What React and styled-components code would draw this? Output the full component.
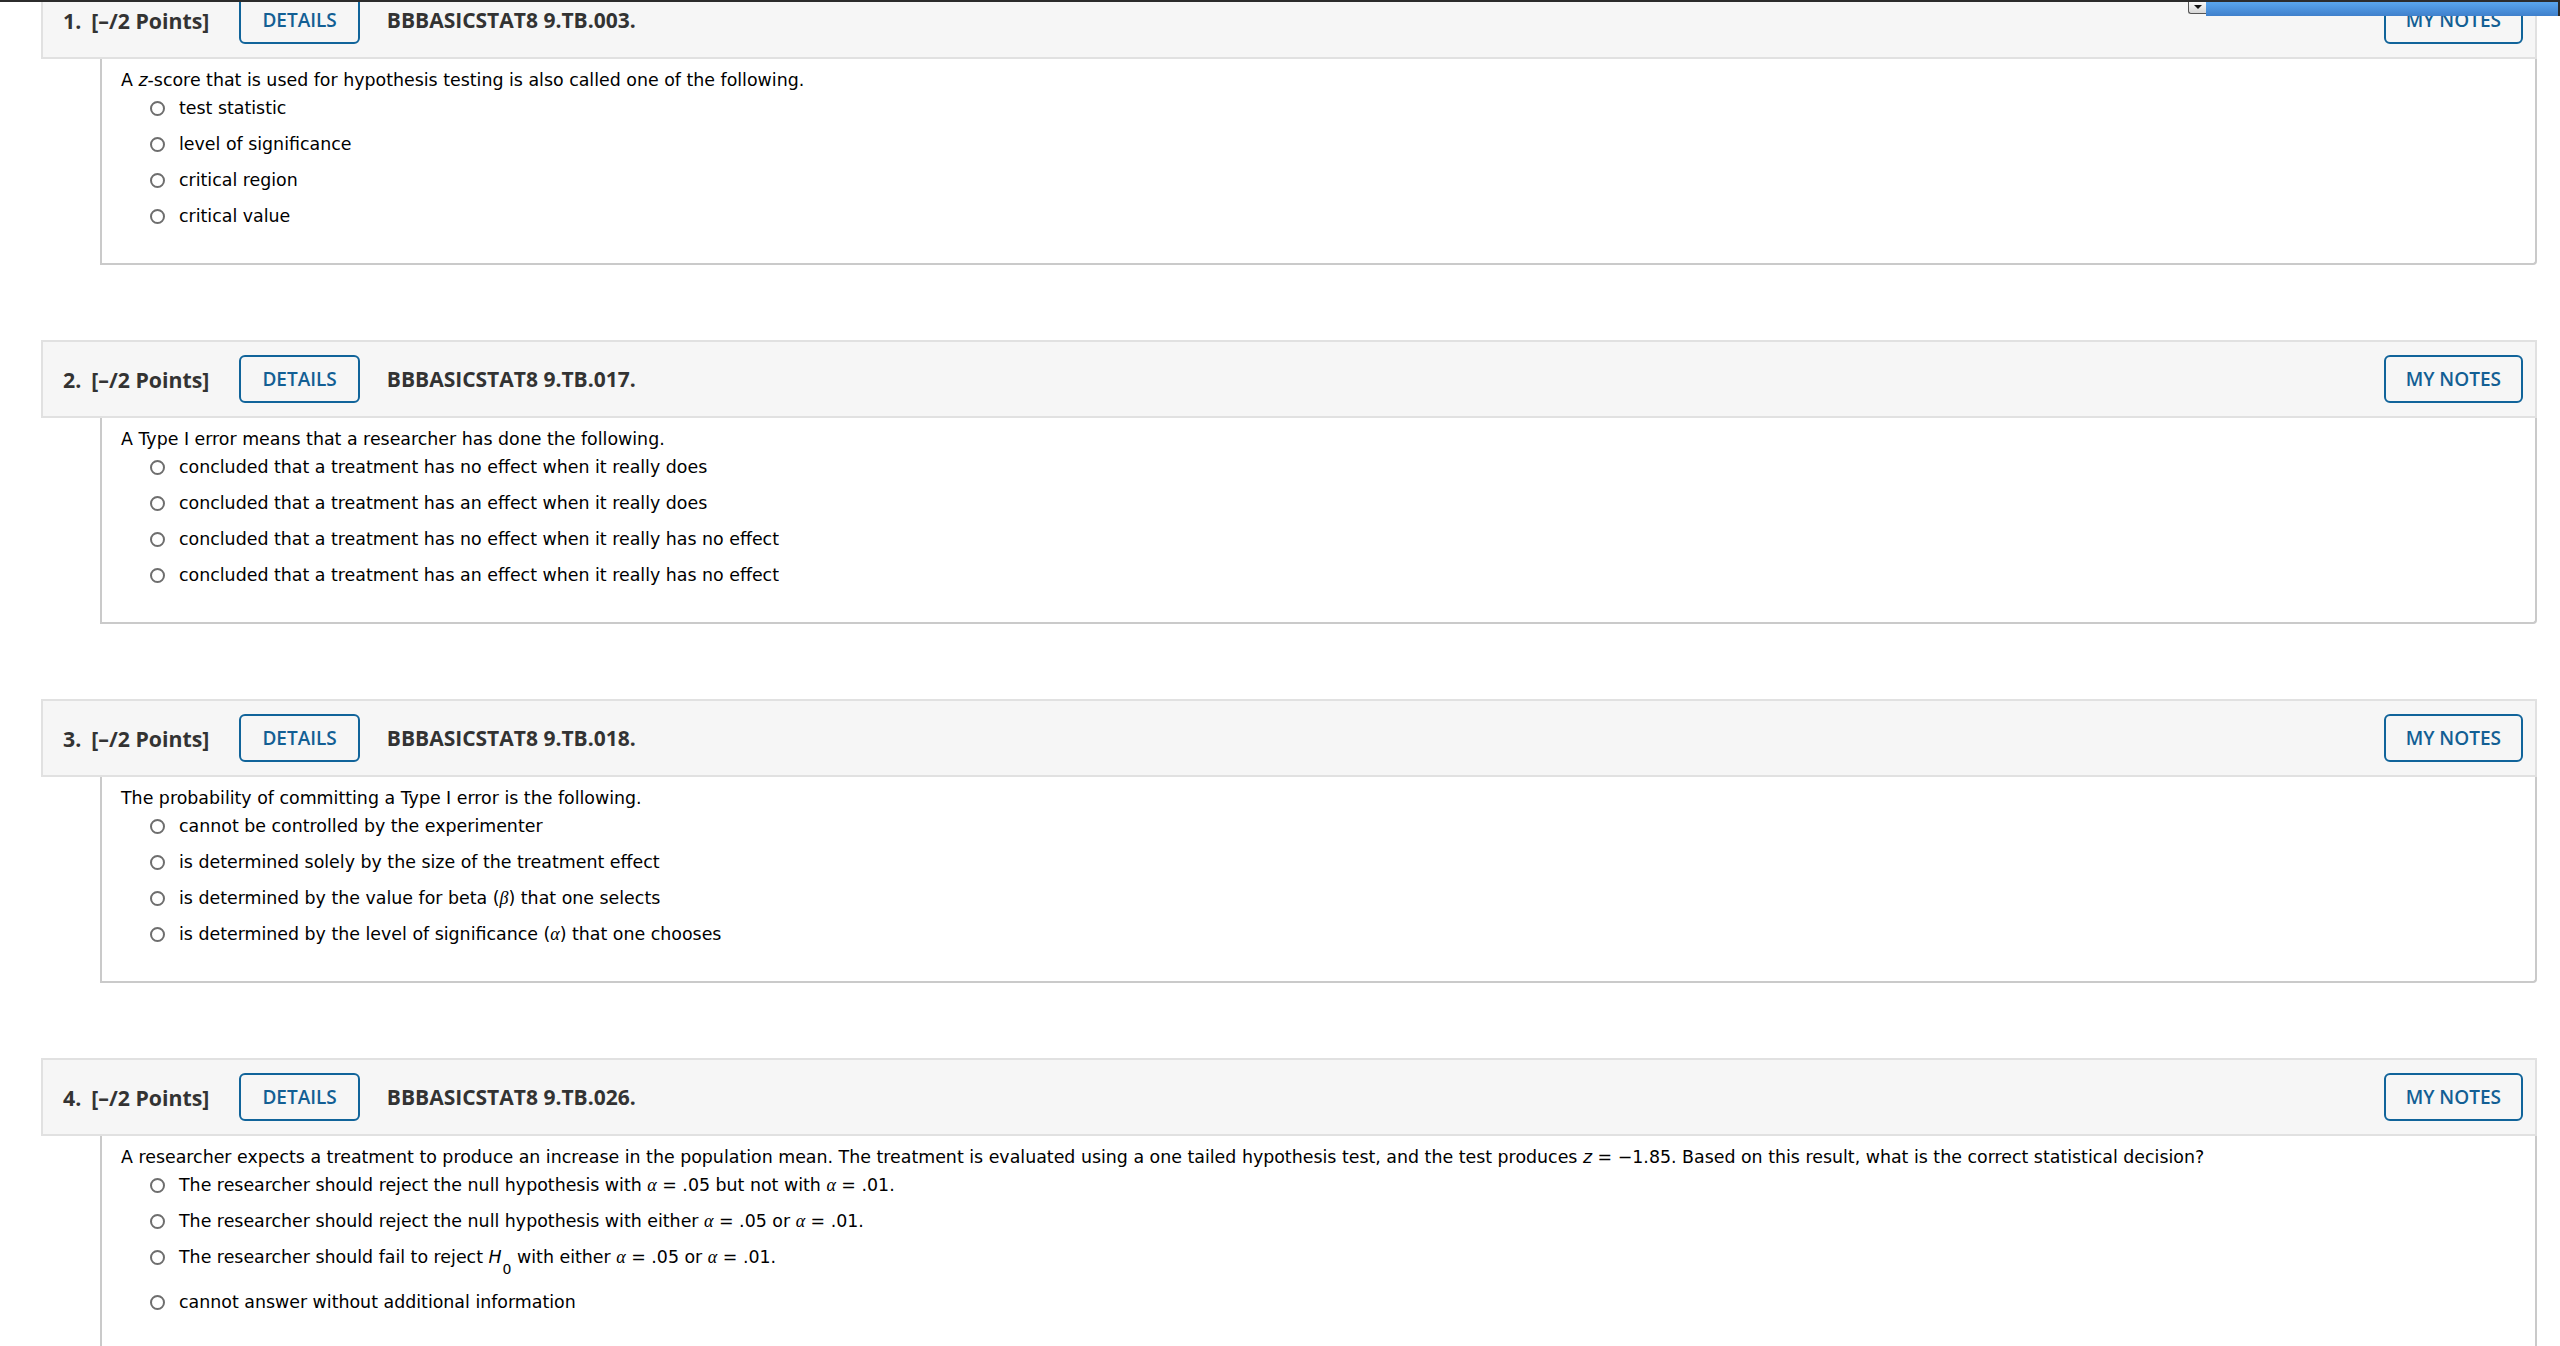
import React from "react";
import styled, { createGlobalStyle } from "styled-components";

const GlobalStyle = createGlobalStyle`
  html, body {
    margin: 0;
    padding: 0;
    background: #fff;
  }
  body {
    font-family: "DejaVu Sans", Verdana, sans-serif;
    color: #111;
  }
`;

// little math helpers
const Var = styled.i`
  font-family: "DejaVu Sans", Verdana, sans-serif;
  font-style: italic;
`;

const Greek = styled.i`
  font-family: "Liberation Serif", "DejaVu Serif", serif;
  font-style: italic;
  font-size: 18px;
`;

const Sub = styled.span`
  display: inline-block;
  font-size: 14px;
  line-height: 1;
  vertical-align: -11px;
  margin-left: 1px;
`;

const questions = [
  {
    num: 1,
    code: "BBBASICSTAT8 9.TB.003.",
    text: (
      <>
        A <Var>z</Var>-score that is used for hypothesis testing is also called one of the following.
      </>
    ),
    options: ["test statistic", "level of significance", "critical region", "critical value"],
  },
  {
    num: 2,
    code: "BBBASICSTAT8 9.TB.017.",
    text: "A Type I error means that a researcher has done the following.",
    options: [
      "concluded that a treatment has no effect when it really does",
      "concluded that a treatment has an effect when it really does",
      "concluded that a treatment has no effect when it really has no effect",
      "concluded that a treatment has an effect when it really has no effect",
    ],
  },
  {
    num: 3,
    code: "BBBASICSTAT8 9.TB.018.",
    text: "The probability of committing a Type I error is the following.",
    options: [
      "cannot be controlled by the experimenter",
      "is determined solely by the size of the treatment effect",
      <>
        is determined by the value for beta (<Greek>β</Greek>) that one selects
      </>,
      <>
        is determined by the level of significance (<Greek>α</Greek>) that one chooses
      </>,
    ],
  },
  {
    num: 4,
    code: "BBBASICSTAT8 9.TB.026.",
    text: (
      <>
        A researcher expects a treatment to produce an increase in the population mean. The treatment is
        evaluated using a one tailed hypothesis test, and the test produces <Var>z</Var> = −1.85. Based on
        this result, what is the correct statistical decision?
      </>
    ),
    options: [
      <>
        The researcher should reject the null hypothesis with <Greek>α</Greek> = .05 but not with{" "}
        <Greek>α</Greek> = .01.
      </>,
      <>
        The researcher should reject the null hypothesis with either <Greek>α</Greek> = .05 or{" "}
        <Greek>α</Greek> = .01.
      </>,
      <>
        The researcher should fail to reject <Var>H</Var>
        <Sub>0</Sub> with either <Greek>α</Greek> = .05 or <Greek>α</Greek> = .01.
      </>,
      "cannot answer without additional information",
    ],
  },
];

const App = () => {
  return (
    <>
      <GlobalStyle />
      <TopStrip />
      <Toggle />
      <BlueTab />
      <Page>
        {questions.map((q) => (
          <Card key={q.num}>
            <Header>
              <Label>
                {q.num}.<Points>[–/2 Points]</Points>
              </Label>
              <OutlineButton>DETAILS</OutlineButton>
              <Code>{q.code}</Code>
              <Spacer />
              <OutlineButton wide>MY NOTES</OutlineButton>
            </Header>
            <Body>
              <Question>{q.text}</Question>
              <Options>
                {q.options.map((opt, i) => (
                  <Option key={i}>
                    <Radio />
                    <OptionText>{opt}</OptionText>
                  </Option>
                ))}
              </Options>
            </Body>
          </Card>
        ))}
      </Page>
    </>
  );
};

const TopStrip = styled.div`
  position: fixed;
  top: 0;
  left: 0;
  right: 0;
  height: 2px;
  background: #2c2c2c;
  z-index: 10;
`;

const BlueTab = styled.div`
  position: fixed;
  top: 0;
  right: 0;
  width: 354px;
  height: 16px;
  box-sizing: border-box;
  border-top: 2px solid #2c2c2c;
  border-right: 2px solid #2c2c2c;
  background: linear-gradient(#5aa6ee, #3f80cc);
  z-index: 11;
`;

const Toggle = styled.div`
  position: fixed;
  top: 2px;
  right: 354px;
  width: 18px;
  height: 12px;
  box-sizing: border-box;
  border: 1px solid #555;
  border-top: none;
  border-right: none;
  border-radius: 0 0 0 3px;
  background: linear-gradient(#fafafa, #d6d6d6);
  z-index: 11;

  &::after {
    content: "";
    position: absolute;
    left: 5px;
    top: 3px;
    border-left: 4px solid transparent;
    border-right: 4px solid transparent;
    border-top: 4px solid #111;
  }
`;

const Page = styled.div`
  display: flex;
  flex-direction: column;
  gap: 75px;
  margin: -19px 23px 0 41px;
`;

const Card = styled.section`
  display: flex;
  flex-direction: column;
`;

const Header = styled.div`
  display: flex;
  align-items: center;
  gap: 30px;
  height: 78px;
  box-sizing: border-box;
  padding: 0 12px 0 20px;
  background: #f6f6f6;
  border: 2px solid #e1e1e1;
  font-family: "Open Sans", "Noto Sans", sans-serif;
  font-weight: 700;
  font-size: 21.3px;
  color: #333;
`;

const Label = styled.div`
  white-space: nowrap;
`;

const Points = styled.span`
  margin-left: 10px;
`;

const Code = styled.div`
  white-space: nowrap;
  margin-left: -3px;
  font-size: 21px;
`;

const Spacer = styled.div`
  flex: 1;
`;

const OutlineButton = styled.button`
  height: 48px;
  box-sizing: border-box;
  padding: 0 ${(p) => (p.wide ? "20px" : "21px")};
  background: transparent;
  border: 2px solid #11649a;
  border-radius: 6px;
  font-family: "Open Sans", "Noto Sans", sans-serif;
  font-weight: 600;
  font-size: 19px;
  color: #135f94;
  cursor: pointer;
`;

const Body = styled.div`
  margin-left: 59px;
  padding: 11px 20px 29px 19px;
  border: 2px solid #cacaca;
  border-top: none;
  border-bottom-right-radius: 4px;
  font-size: 17.4px;
  line-height: 20px;
  color: #000;
`;

const Question = styled.div``;

const Options = styled.div`
  display: flex;
  flex-direction: column;
`;

const Option = styled.label`
  display: flex;
  align-items: flex-start;
  gap: 14px;
  padding: 8px 0 8px 29px;
`;

const Radio = styled.span`
  flex: none;
  width: 15px;
  height: 15px;
  margin-top: 3px;
  box-sizing: border-box;
  border: 2px solid #6e6e6e;
  border-radius: 50%;
  background: #fff;
`;

const OptionText = styled.span``;

export default App;
